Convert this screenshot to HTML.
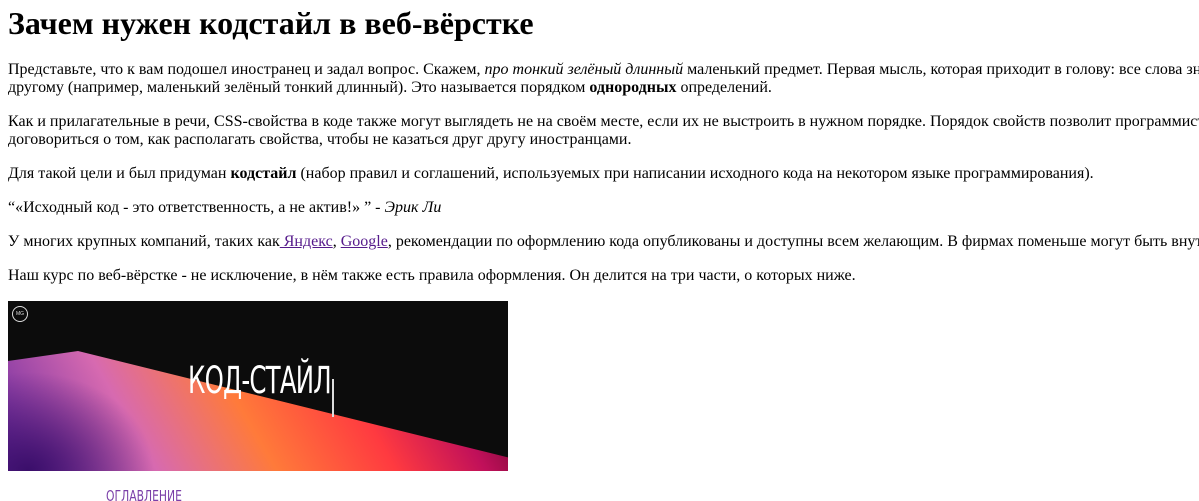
<!DOCTYPE html>
<html><head><meta charset="utf-8"><style>
html,body{margin:0;padding:0;background:#fff;overflow:hidden;width:1199px;height:501px}
.wrap{position:relative;top:-3px;margin:8px;width:1400px;font-family:"Liberation Serif",serif;font-size:16px;color:#000;line-height:18px;white-space:nowrap}
h1{font-size:32px;line-height:37px;margin:0 0 19px}
p{margin:16px 0}
a{color:#551a8b}
.hero{width:500px;height:170px;position:relative;overflow:hidden;background:
radial-gradient(ellipse 140px 110px at 20px 170px,#3a0e6a,transparent 90%),
linear-gradient(60deg,#6a2aa0 0%,#d76ab0 25%,#ff7a3a 45%,#ff3a40 65%,#c0105a 80%,#300010 100%)}
.hero .dark{position:absolute;inset:0;background:#0c0c0c;clip-path:polygon(0 0,100% 0,100% 92%,70px 50px,0 60px)}
.hero .t{position:absolute;left:180px;top:70px;color:#fff;font-family:"DejaVu Sans Condensed","Liberation Sans Narrow",sans-serif;font-size:34px;letter-spacing:-1px;transform:scale(.8,1.1);transform-origin:0 0}
.hero .cur{position:absolute;left:324px;top:78px;width:2px;height:38px;background:#ddd}
.hero .logo{position:absolute;left:4px;top:5px;width:14px;height:14px;border:1px solid #ddd;border-radius:50%;color:#ddd;font-size:5px;text-align:center;line-height:14px;font-family:"Liberation Sans",sans-serif}
.toc{margin-left:98px;margin-top:16px;font-family:"DejaVu Sans Condensed",sans-serif;font-size:15px;color:#7a3fa8;transform:scaleX(.8);transform-origin:0 0}
</style></head><body><div class="wrap">
<h1>Зачем нужен кодстайл в веб-вёрстке</h1>
<p>Представьте, что к вам подошел иностранец и задал вопрос. Скажем, <i>про тонкий зелёный длинный</i> маленький предмет. Первая мысль, которая приходит в голову: все слова знакомы, но стоят не по порядку. Нужно расставить их по<br>другому (например, маленький зелёный тонкий длинный). Это называется порядком <b>однородных</b> определений.</p>
<p>Как и прилагательные в речи, CSS-свойства в коде также могут выглядеть не на своём месте, если их не выстроить в нужном порядке. Порядок свойств позволит программистам<br>договориться о том, как располагать свойства, чтобы не казаться друг другу иностранцами.</p>
<p>Для такой цели и был придуман <b>кодстайл</b> (набор правил и соглашений, используемых при написании исходного кода на некотором языке программирования).</p>
<p>“«Исходный код - это ответственность, а не актив!» ” - <i>Эрик Ли</i></p>
<p>У многих крупных компаний, таких как<a href="#"> Яндекс</a>, <a href="#">Google</a>, рекомендации по оформлению кода опубликованы и доступны всем желающим. В фирмах поменьше могут быть внутренние правила.</p>
<p>Наш курс по веб-вёрстке - не исключение, в нём также есть правила оформления. Он делится на три части, о которых ниже.</p>
<div class="hero"><div class="dark"></div><div class="logo">MG</div><div class="t">КОД-СТАЙЛ</div><div class="cur"></div></div>
<div class="toc">ОГЛАВЛЕНИЕ</div>
</div></body></html>
